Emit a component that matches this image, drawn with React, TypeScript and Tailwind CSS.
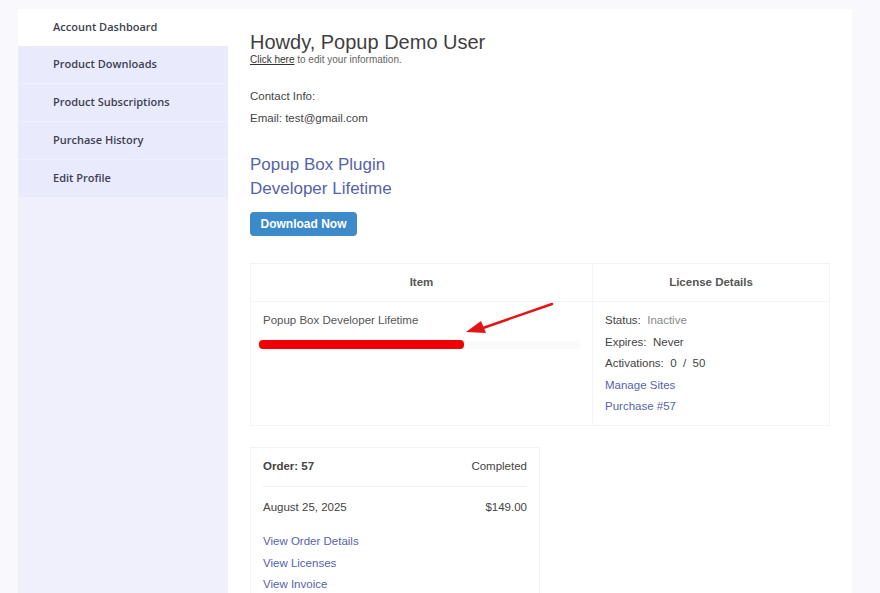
import React from 'react';

const navItems = ['Product Downloads', 'Product Subscriptions', 'Purchase History', 'Edit Profile'];

export default function App() {
  return (
    <div className="h-[593px] w-[880px] overflow-hidden bg-[#f8f8fd] pt-[9px] flex font-['Liberation_Sans',Arial,sans-serif]">
      {/* Sidebar */}
      <aside className="ml-[18px] w-[210px] flex flex-col font-['Open_Sans','Noto_Sans',sans-serif] text-[11px] font-semibold text-[#3e3f52]">
        <div className="h-[37px] bg-white flex items-center pl-[35px]">Account Dashboard</div>
        {navItems.map((item) => (
          <div key={item} className="h-[38px] bg-[#e9eafb] border-b border-[#eef0fc] flex items-center pl-[35px]">
            {item}
          </div>
        ))}
        <div className="flex-1 bg-[#eff0fc]" />
      </aside>

      {/* Main */}
      <main className="w-[624px] bg-white pl-[22px] pt-[22px]">
        <h1 className="text-[20px] leading-[23px] text-[#3f3f3f]">Howdy, Popup Demo User</h1>
        <p className="text-[10px] leading-[12px] text-[#666]">
          <a className="underline text-[#333]">Click here</a> to edit your information.
        </p>

        <div className="mt-[23px] text-[11.5px] leading-[14px] text-[#444] space-y-[8px]">
          <p>Contact Info:</p>
          <p>Email: test@gmail.com</p>
        </div>

        <h2 className="mt-[28px] text-[17px] leading-[24px] text-[#5563ad]">
          Popup Box Plugin
          <br />
          Developer Lifetime
        </h2>

        <button className="mt-[11px] h-[24px] w-[107px] rounded-[4px] bg-[#3d8acb] text-white text-[12px] font-bold">
          Download Now
        </button>

        {/* License table */}
        <div className="mt-[27px] w-[580px] border border-[#f3f3f3] text-[11.5px] text-[#555]">
          <div className="flex h-[38px] border-b border-[#f3f3f3] font-bold text-[#555]">
            <div className="w-[342px] border-r border-[#f4f4f4] flex items-center justify-center">Item</div>
            <div className="flex-1 flex items-center justify-center">License Details</div>
          </div>
          <div className="flex h-[123px]">
            <div className="relative w-[342px] border-r border-[#f4f4f4] pl-[12px] pt-[11px]">
              <p className="leading-[14px] text-[#555]">Popup Box Developer Lifetime</p>
              <div className="mt-[13px] -ml-[4px] flex items-center">
                <div className="h-[9px] w-[205px] rounded-[4px] bg-[#f00000]" />
                <div className="h-[8px] w-[116px] bg-[#fafafa]" />
              </div>
              <svg className="absolute left-[210px] top-0 w-[100px] h-[36px]" viewBox="0 0 100 36">
                <line x1="91" y1="2" x2="22" y2="26" stroke="#e41414" strokeWidth="2.4" strokeLinecap="round" />
                <polygon points="5,30 20,19 25,31" fill="#e41414" />
              </svg>
            </div>
            <div className="flex-1 pl-[12px] pt-[11px] leading-[14px] text-[#444] space-y-[7.5px]">
              <p>Status:&nbsp; <span className="text-[#888]">Inactive</span></p>
              <p>Expires:&nbsp; Never</p>
              <p>Activations:&nbsp; 0&nbsp; /&nbsp; 50</p>
              <p className="text-[#5563ad]">Manage Sites</p>
              <p className="text-[#5563ad]">Purchase #57</p>
            </div>
          </div>
        </div>

        {/* Order card */}
        <div className="mt-[21px] w-[290px] h-[160px] border border-[#f3f3f3] px-[12px] text-[11.5px] text-[#444]">
          <div className="flex justify-between items-center h-[39px] border-b border-[#eeeeee]">
            <span className="font-bold">Order: 57</span>
            <span>Completed</span>
          </div>
          <div className="flex justify-between items-center h-[42px]">
            <span>August 25, 2025</span>
            <span>$149.00</span>
          </div>
          <div className="text-[#5563ad] space-y-[7.5px] leading-[14px] pt-[5px]">
            <p>View Order Details</p>
            <p>View Licenses</p>
            <p>View Invoice</p>
          </div>
        </div>
      </main>
    </div>
  );
}
